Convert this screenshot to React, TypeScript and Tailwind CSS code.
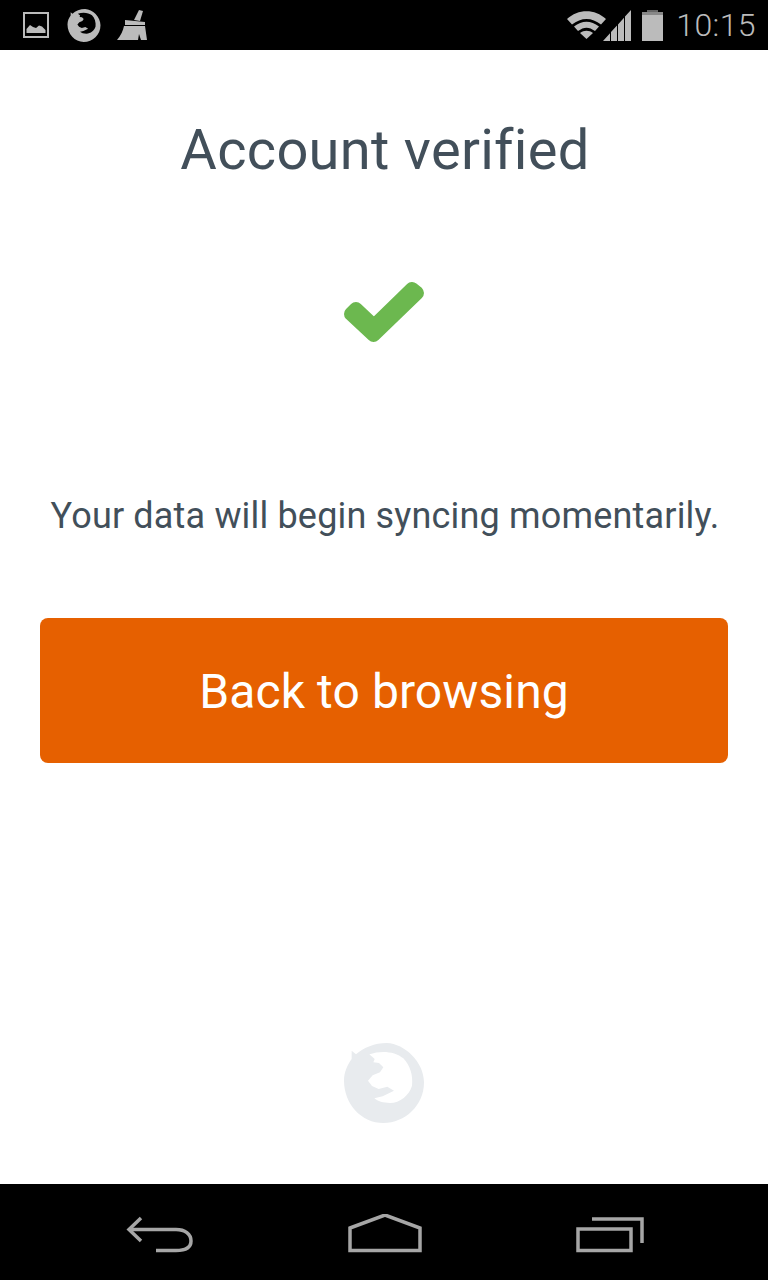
import React from "react";

const foxPath =
  "M35 35 L48 46 C70 26 105 12 140 12 C195 14 252 70 252 130 C252 200 195 252 130 252 C65 252 12 195 12 125 C12 100 22 78 35 60 Z M88 46 C120 34 165 36 190 58 C210 78 220 110 216 140 C208 168 180 192 150 192 C130 192 113 187 103 178 L128 172 L162 155 L142 143 L116 150 L96 141 L84 125 L98 109 L120 100 L130 85 L117 72 L100 70 L104 60 Z";

function Fox({ className }: { className: string }) {
  return (
    <svg viewBox="12 12 240 240" className={className}>
      <path d={foxPath} fill="currentColor" fillRule="evenodd" />
    </svg>
  );
}

function StatusBar() {
  return (
    <div className="h-[50px] bg-black flex items-center justify-between text-[#bbbbbb]">
      <div className="flex items-center pl-[23px]">
        <svg viewBox="0 0 26 26" className="w-[26px] h-[26px]">
          <rect x="1" y="1" width="24" height="24" fill="none" stroke="currentColor" strokeWidth="2" />
          <path d="M3.5 21 L3.5 17 L7 13 L10 15 L13 16 L16 13.5 L19 14.5 L22.5 18 L22.5 21 Z" fill="currentColor" />
        </svg>
        <Fox className="w-[34px] h-[33px] ml-[18px]" />
        <svg viewBox="115 8 33 32" className="w-[33px] h-[32px] ml-[14px]">
          <path d="M134 19 L139 9 L143 10 L140 20 Z" fill="currentColor" />
          <path d="M125 19 L145 21 L145 24 L125 24 Z" fill="currentColor" />
          <path d="M124 25 L145 25 L147 39 L141 39 L139 33 L138 39 L117 39 C121 34 123 30 124 25 Z" fill="currentColor" />
        </svg>
      </div>
      <div className="flex items-center pr-[12px]">
        <svg viewBox="0 0 39 28" className="w-[39px] h-[28px]">
          <path d="M0 8 C11 -2.5 28 -2.5 39 8 L34 13.5 C25 6 14 6 5 13.5 Z" fill="currentColor" />
          <path d="M7 15.5 C15 9 24 9 32 15.5 L28 20 C22 15.5 17 15.5 11 20 Z" fill="currentColor" />
          <path d="M13 22 C17 19 22 19 26 22 L19.5 28 Z" fill="currentColor" />
        </svg>
        <svg viewBox="0 0 28 31" className="w-[28px] h-[31px] ml-[-3px]">
          <path d="M0 31 L7 23.2 L7 31 Z M8 22.1 L14 15.5 L14 31 L8 31 Z M15 14.4 L21 7.75 L21 31 L15 31 Z M22 6.6 L28 0 L28 31 L22 31 Z" fill="currentColor" />
        </svg>
        <svg viewBox="0 0 21 31" className="w-[21px] h-[31px] ml-[11px]">
          <path d="M5 0 H16 V2 H5 Z" fill="#666666" />
          <path d="M0 2 H21 V5 H0 Z" fill="#888888" />
          <path d="M0 5 H21 V31 H0 Z" fill="currentColor" />
        </svg>
        <span className="ml-[13px] text-[32px] leading-none font-light tracking-[0.4px] font-['Roboto',sans-serif]">10:15</span>
      </div>
    </div>
  );
}

function NavBar() {
  return (
    <div className="h-[96px] bg-black flex items-start justify-between pl-[126px] pr-[123px] pt-[30px] text-[#a6a6a6]">
      <svg viewBox="0 0 68 40" className="w-[68px] h-[40px]" fill="none" stroke="currentColor" strokeWidth="3.5">
        <path d="M15 4 L3 15.5 L15 27" />
        <path d="M3 15.5 H50 C59 15.5 65 20 65 27 C65 34 59 36.5 50 36.5 H30" />
      </svg>
      <svg viewBox="0 0 74 40" className="w-[74px] h-[40px]" fill="none" stroke="currentColor" strokeWidth="3.5">
        <path d="M2 14 L37 1 L72 14 V36.5 H2 Z" />
      </svg>
      <svg viewBox="0 0 70 40" className="w-[70px] h-[40px]" fill="none" stroke="currentColor" strokeWidth="3.5">
        <path d="M17 5 H67 V29" />
        <rect x="3" y="15" width="53" height="21.5" />
      </svg>
    </div>
  );
}

export default function App() {
  return (
    <div className="h-[1280px] w-[768px] flex flex-col bg-white font-['Roboto',sans-serif] overflow-hidden">
      <StatusBar />
      <main className="flex-1 flex flex-col items-center px-[40px]">
        <h1 className="mt-[68px] ml-[2px] text-[56px] leading-[64px] text-[#424f5a] tracking-[0.3px]">Account verified</h1>
        <svg viewBox="0 0 80 60" className="w-[80px] h-[60px] mt-[100px]">
          <path d="M12 27 L7 32 L29.5 53 L73 11 L68 7 L30 44 Z" fill="#6cb84f" stroke="#6cb84f" strokeWidth="14" strokeLinejoin="round" />
        </svg>
        <p className="mt-[152px] ml-[2px] text-[36px] leading-[44px] tracking-[0.17px] text-[#424f5a] whitespace-nowrap">Your data will begin syncing momentarily.</p>
        <button className="mt-[80px] w-full h-[145px] pt-[3px] rounded-[8px] bg-[#e66000] text-white text-[48px] tracking-[0.1px]">Back to browsing</button>
        <Fox className="w-[80px] h-[80px] mt-[280px] text-[#e8ebee]" />
      </main>
      <NavBar />
    </div>
  );
}
